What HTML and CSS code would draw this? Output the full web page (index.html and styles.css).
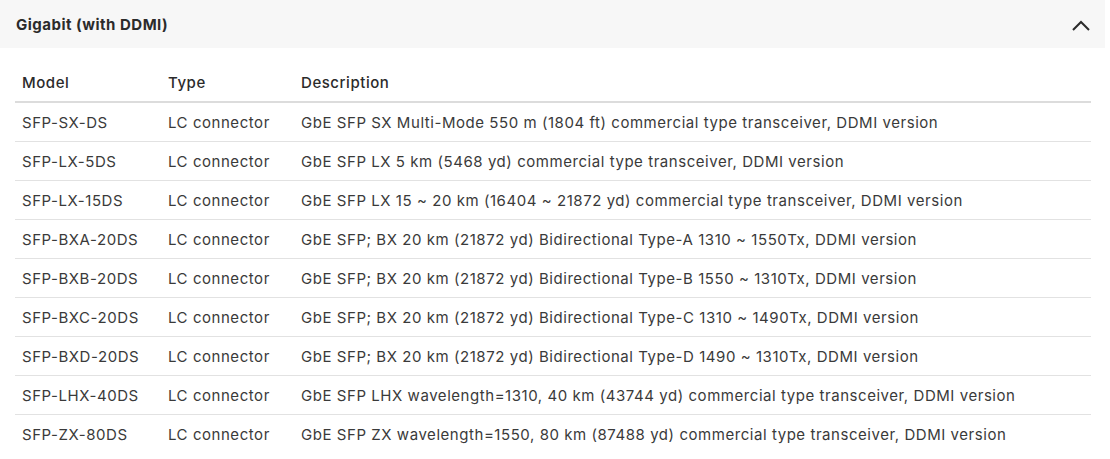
FILE: index.html
```html
<!DOCTYPE html>
<html>
<head>
<meta charset="utf-8">
<link rel="stylesheet" href="styles.css">
</head>
<body>
<div class="panel">
  <div class="panel-head">
    <span class="panel-title">Gigabit (with DDMI)</span>
    <svg class="chevron" width="20" height="12" viewBox="0 0 20 12"><path d="M2 10 L10 2 L18 10" fill="none" stroke="#2b2b2b" stroke-width="2"/></svg>
  </div>
  <div class="panel-body">
    <table class="spec">
      <thead>
        <tr><th class="c-model">Model</th><th class="c-type">Type</th><th>Description</th></tr>
      </thead>
      <tbody>
        <tr><td>SFP-SX-DS</td><td>LC connector</td><td>GbE SFP SX Multi-Mode 550 m (1804 ft) commercial type transceiver, DDMI version</td></tr>
        <tr><td>SFP-LX-5DS</td><td>LC connector</td><td>GbE SFP LX 5 km (5468 yd) commercial type transceiver, DDMI version</td></tr>
        <tr><td>SFP-LX-15DS</td><td>LC connector</td><td>GbE SFP LX 15 ~ 20 km (16404 ~ 21872 yd) commercial type transceiver, DDMI version</td></tr>
        <tr><td>SFP-BXA-20DS</td><td>LC connector</td><td>GbE SFP; BX 20 km (21872 yd) Bidirectional Type-A 1310 ~ 1550Tx, DDMI version</td></tr>
        <tr><td>SFP-BXB-20DS</td><td>LC connector</td><td>GbE SFP; BX 20 km (21872 yd) Bidirectional Type-B 1550 ~ 1310Tx, DDMI version</td></tr>
        <tr><td>SFP-BXC-20DS</td><td>LC connector</td><td>GbE SFP; BX 20 km (21872 yd) Bidirectional Type-C 1310 ~ 1490Tx, DDMI version</td></tr>
        <tr><td>SFP-BXD-20DS</td><td>LC connector</td><td>GbE SFP; BX 20 km (21872 yd) Bidirectional Type-D 1490 ~ 1310Tx, DDMI version</td></tr>
        <tr><td>SFP-LHX-40DS</td><td>LC connector</td><td>GbE SFP LHX wavelength=1310, 40 km (43744 yd) commercial type transceiver, DDMI version</td></tr>
        <tr><td>SFP-ZX-80DS</td><td>LC connector</td><td>GbE SFP ZX wavelength=1550, 80 km (87488 yd) commercial type transceiver, DDMI version</td></tr>
      </tbody>
    </table>
  </div>
</div>
</body>
</html>
```

FILE: styles.css
```css
html, body {
  margin: 0;
  padding: 0;
  background: #fff;
}
body {
  font-family: Inter, "Liberation Sans", sans-serif;
  color: #333;
}
.panel {
  width: 1105px;
}
.panel-head {
  height: 48px;
  background: #f7f7f7;
  display: flex;
  align-items: center;
  justify-content: space-between;
  padding: 0 16px;
  box-sizing: border-box;
}
.panel-title {
  font-size: 15px;
  font-weight: 700;
  letter-spacing: 0.5px;
  color: #2b2b2b;
}
.chevron {
  margin-right: -2px;
  margin-top: 4px;
}
.panel-body {
  padding: 15px 14px 0 15px;
}
.spec {
  width: 100%;
  border-collapse: collapse;
  font-size: 15px;
  letter-spacing: 0.55px;
}
.spec th {
  text-align: left;
  font-weight: 500;
  height: 38px;
  padding: 0 0 0 7px;
  border-bottom: 2px solid #dcdcdc;
  color: #2b2b2b;
}
.spec td {
  height: 38px;
  padding: 0 0 0 7px;
  border-bottom: 1px solid #e2e2e2;
  color: #3a3a3a;
}
.spec tbody tr:last-child td {
  border-bottom: none;
}
.c-model { width: 139px; }
.c-type { width: 126px; }
```
